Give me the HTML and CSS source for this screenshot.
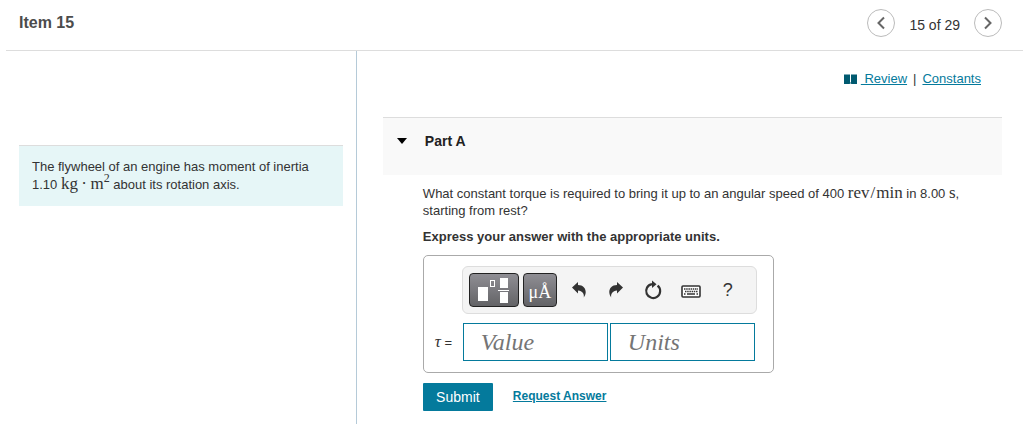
FILE: index.html
```html
<!DOCTYPE html>
<html lang="en">
<head>
    <meta charset="UTF-8">
    <meta name="viewport" content="width=device-width, initial-scale=1.0">
    <title>Item 15</title>
    <link rel="stylesheet" href="styles.css">
</head>
<body>
    <header class="item-header">
        <h1>Item 15</h1>
        <nav class="pager">
            <button type="button" class="round-button" aria-label="Previous item">
                <svg width="10" height="14" viewBox="0 0 10 14"><path d="M8 1.5 L2.5 7 L8 12.5"/></svg>
            </button>
            <span class="pager-text">15 of 29</span>
            <button type="button" class="round-button" aria-label="Next item">
                <svg width="10" height="14" viewBox="0 0 10 14"><path d="M2 1.5 L7.5 7 L2 12.5"/></svg>
            </button>
        </nav>
    </header>

    <div class="columns">
        <aside class="left-column">
            <div class="intro">
                The flywheel of an engine has moment of inertia<br>
                1.10 <span class="math">kg&thinsp;·&thinsp;m<sup>2</sup></span>&nbsp;about its rotation axis.
            </div>
        </aside>

        <main class="right-column">
            <div class="links">
                <svg class="book" width="13" height="10" viewBox="0 0 13 10">
                    <path d="M0 0.5 H6 V8.5 H7 V0.5 H13 V10 H7.5 L6.5 9.3 L5.5 10 H0 Z"/>
                </svg>
                <a href="#">&nbsp;Review</a>
                <span class="divider">|</span>
                <a href="#">Constants</a>
            </div>

            <section class="part">
                <button type="button" class="part-header">
                    <svg width="10" height="6" viewBox="0 0 10 6"><path d="M0 0 H10 L5 6 Z"/></svg>
                    Part A
                </button>

                <div class="part-body">
                    <p>What constant torque is required to bring it up to an angular speed of 400 <span class="math">rev<span class="slash">/</span>min</span> in 8.00 <span class="math">s</span>, starting from rest?</p>
                    <p class="instructions">Express your answer with the appropriate units.</p>

                    <form action="#">
                        <div class="answer-box">
                            <div class="toolbar">
                                <button type="button" class="dark-button templates" aria-label="Templates">
                                    <svg width="32" height="26" viewBox="0 0 32 26">
                                        <rect x="0" y="10" width="10" height="14" fill="#fff"/>
                                        <rect x="12.5" y="3.5" width="4" height="6" fill="none" stroke="#fff"/>
                                        <rect x="22" y="1" width="8" height="10" fill="#fff"/>
                                        <rect x="20" y="13" width="11" height="1" fill="#fff"/>
                                        <rect x="22" y="15" width="8" height="11" fill="#fff"/>
                                    </svg>
                                </button>
                                <button type="button" class="dark-button symbols" aria-label="Symbols">μÅ</button>
                                <div class="tools">
                                    <button type="button" class="tool" aria-label="Undo">
                                        <svg width="14" height="16" viewBox="0 0 14 16"><path d="M0 5.5 L6 0 V3 C11 3 14 6.5 13.7 10.5 C13.5 12.5 12.8 14 11.8 15.5 C12.3 11.5 10.5 9 6 8.5 V11.5 Z"/></svg>
                                    </button>
                                    <button type="button" class="tool" aria-label="Redo">
                                        <svg width="14" height="16" viewBox="0 0 14 16"><path d="M14 5.5 L8 0 V3 C3 3 0 6.5 0.3 10.5 C0.5 12.5 1.2 14 2.2 15.5 C1.7 11.5 3.5 9 8 8.5 V11.5 Z"/></svg>
                                    </button>
                                    <button type="button" class="tool" aria-label="Reset">
                                        <svg width="18" height="20" viewBox="0 0 18 20">
                                            <path class="line" d="M13.6 5.6 A7 7 0 1 1 8 4.1" stroke-width="2.2"/>
                                            <path d="M8 0.5 L12.5 4.2 L8 8 Z"/>
                                        </svg>
                                    </button>
                                    <button type="button" class="tool" aria-label="Keyboard">
                                        <svg width="20" height="20" viewBox="0 0 20 20">
                                            <rect x="1" y="6" width="18" height="11" rx="1" fill="#fff" stroke="#333" stroke-width="1.6"/>
                                            <path class="line" d="M3 9 H17 M4 11.5 H17" stroke-width="1.4" stroke-dasharray="1.5 0.7"/>
                                            <path class="line" d="M3 14 H4.5 M6 14 H14 M15.5 14 H17" stroke-width="1.4"/>
                                        </svg>
                                    </button>
                                    <button type="button" class="tool help" aria-label="Help">?</button>
                                </div>
                            </div>
                            <div class="answer-row">
                                <label for="value"><span class="tau">τ</span> =</label>
                                <input type="text" id="value" placeholder="Value">
                                <input type="text" id="units" placeholder="Units" aria-label="Units">
                            </div>
                        </div>
                        <div class="actions">
                            <button type="submit" class="submit">Submit</button>
                            <a href="#">Request Answer</a>
                        </div>
                    </form>
                </div>
            </section>
        </main>
    </div>
</body>
</html>
```
FILE: styles.css
```css
* {
    box-sizing: border-box;
}
body {
    font-family: "Liberation Sans", Arial, sans-serif;
    font-size: 13px;
    line-height: 17px;
    color: #333;
    margin: 0 0 0 6px;
    min-height: 100vh;
    background-color: #fff;
    display: flex;
    flex-direction: column;
}
button {
    font-family: inherit;
    cursor: pointer;
}
a {
    color: #047a9c;
}
svg {
    display: block;
}
.item-header {
    display: flex;
    justify-content: space-between;
    align-items: flex-start;
    height: 51px;
    padding: 9px 21px 0 13px;
    border-bottom: 1px solid #ddd;
}
.item-header h1 {
    margin: 5px 0 0;
    font-size: 16px;
    line-height: 18px;
    color: #4c4c4c;
}
.pager {
    display: flex;
    align-items: center;
    gap: 14px;
}
.pager-text {
    font-size: 14px;
    padding-top: 4px;
}
.round-button {
    display: flex;
    align-items: center;
    justify-content: center;
    width: 28px;
    height: 28px;
    padding: 0;
    border: 1px solid #bbb;
    border-radius: 50%;
    background: #fff;
}
.round-button path {
    fill: none;
    stroke: #666;
    stroke-width: 2;
}
.columns {
    display: flex;
    flex: 1;
}
.left-column {
    width: 34.5%;
    padding: 94px 13px 0;
    border-right: 1px solid #b5cad8;
}
.intro {
    padding: 12px 13px;
    line-height: 18px;
    background-color: #e6f6f7;
    border-top: 1px solid #ddd;
}
.math {
    font-family: "Liberation Serif", "Times New Roman", serif;
    font-size: 17px;
    line-height: 14px;
}
.math sup {
    font-size: 12px;
    line-height: 0;
}
.slash {
    margin: 0 1px;
}
.right-column {
    flex: 1;
    padding: 19px 21px 12px 26px;
}
.links {
    display: flex;
    justify-content: flex-end;
    align-items: center;
    padding-right: 21px;
}
.links .book {
    margin-right: 4px;
    fill: #005a70;
}
.links .divider {
    margin: 0 6px;
}
.part {
    margin-top: 30px;
}
.part-header {
    display: flex;
    align-items: center;
    gap: 18px;
    width: 100%;
    height: 58px;
    padding: 0 14px 12px;
    border: none;
    border-top: 1px solid #ddd;
    background-color: #f9f9f9;
    font-size: 14px;
    font-weight: bold;
    color: #222;
}
.part-body {
    padding: 10px 20px 0 40px;
}
.part-body p {
    margin: 0 0 9px;
}
.part-body .instructions {
    margin-bottom: 10px;
    font-weight: bold;
}
.answer-box {
    width: 351px;
    padding: 10px 16px 11px 11px;
    border: 1px solid #aaa;
    border-radius: 5px;
}
.toolbar {
    display: flex;
    align-items: center;
    gap: 4px;
    height: 48px;
    margin-left: 27px;
    padding: 0 6px;
    border: 1px solid #ddd;
    border-radius: 6px;
    background-color: #f4f4f4;
}
.dark-button {
    display: flex;
    align-items: center;
    justify-content: center;
    height: 34px;
    padding: 0;
    border: 1px solid #222;
    border-radius: 4px;
    background: linear-gradient(#8f8e94, #636366);
    color: #fff;
}
.templates {
    width: 50px;
}
.symbols {
    width: 34px;
    padding-top: 4px;
    font-family: "Liberation Serif", "Times New Roman", serif;
    font-size: 18px;
}
.tools {
    display: flex;
    flex: 1;
    justify-content: space-between;
    padding: 0 12px 0 8px;
}
.tool {
    display: flex;
    align-items: center;
    justify-content: center;
    width: 20px;
    height: 24px;
    padding: 0;
    border: none;
    background: none;
    color: #333;
}
.tool path {
    fill: #333;
}
.tool .line {
    fill: none;
    stroke: #333;
}
.help {
    font-size: 18px;
}
.answer-row {
    display: flex;
    align-items: center;
    gap: 2px;
    margin: 9px 2px 0 0;
}
.answer-row label {
    width: 26px;
}
.tau {
    font-family: "Liberation Serif", "Times New Roman", serif;
    font-size: 17px;
    font-style: italic;
    line-height: 14px;
}
.answer-row input {
    flex: 1;
    min-width: 0;
    height: 38px;
    padding: 0 17px;
    border: 1px solid #047a9c;
    border-radius: 0;
    font-family: "Liberation Serif", "Times New Roman", serif;
    font-size: 24px;
    color: #333;
}
.answer-row input::placeholder {
    font-style: italic;
    color: #757575;
}
.actions {
    display: flex;
    align-items: center;
    gap: 20px;
    margin-top: 10px;
}
.actions a {
    font-size: 12px;
    font-weight: bold;
    padding-bottom: 2px;
}
.submit {
    width: 70px;
    height: 28px;
    padding: 0;
    border: none;
    border-radius: 1px;
    background-color: #047a9c;
    color: #fff;
    font-size: 14px;
}
```
